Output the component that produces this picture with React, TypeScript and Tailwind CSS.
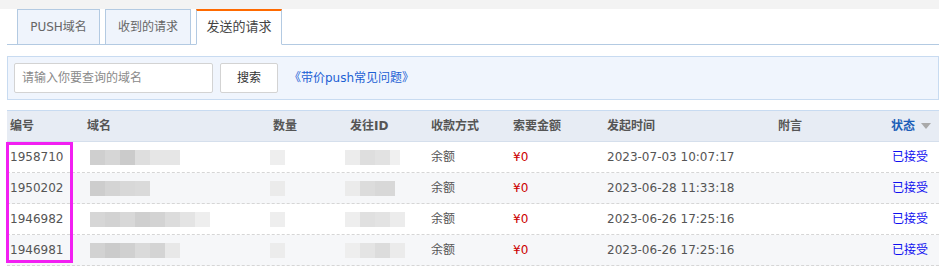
import React from "react";

type Seg = { w: number; c: string };
type Row = {
  id: string;
  name: Seg[];
  qty: Seg[];
  to: Seg[];
  time: string;
};

const rows: Row[] = [
  {
    id: "1958710",
    name: [
      { w: 15, c: "#cfcfcf" },
      { w: 15, c: "#d6d6d6" },
      { w: 15, c: "#cbcbcb" },
      { w: 15, c: "#dedede" },
      { w: 30, c: "#e6e6e6" },
    ],
    qty: [{ w: 15, c: "#eeeeee" }],
    to: [
      { w: 15, c: "#ececec" },
      { w: 15, c: "#dedede" },
      { w: 15, c: "#e2e2e2" },
      { w: 10, c: "#f0f0f0" },
    ],
    time: "2023-07-03 10:07:17",
  },
  {
    id: "1950202",
    name: [
      { w: 15, c: "#cdcdcd" },
      { w: 15, c: "#d4d4d4" },
      { w: 15, c: "#d8d8d8" },
      { w: 15, c: "#dadada" },
    ],
    qty: [{ w: 15, c: "#ebebeb" }],
    to: [
      { w: 15, c: "#ebebeb" },
      { w: 15, c: "#dcdcdc" },
      { w: 20, c: "#d8d8d8" },
    ],
    time: "2023-06-28 11:33:18",
  },
  {
    id: "1946982",
    name: [
      { w: 15, c: "#d6d6d6" },
      { w: 15, c: "#d2d2d2" },
      { w: 15, c: "#d8d8d8" },
      { w: 15, c: "#cfcfcf" },
      { w: 15, c: "#d3d3d3" },
      { w: 15, c: "#dcdcdc" },
      { w: 15, c: "#e4e4e4" },
      { w: 15, c: "#eeeeee" },
    ],
    qty: [{ w: 15, c: "#eeeeee" }],
    to: [
      { w: 15, c: "#eeeeee" },
      { w: 15, c: "#e0e0e0" },
      { w: 15, c: "#e3e3e3" },
      { w: 15, c: "#ececec" },
    ],
    time: "2023-06-26 17:25:16",
  },
  {
    id: "1946981",
    name: [
      { w: 15, c: "#d2d2d2" },
      { w: 15, c: "#cbcbcb" },
      { w: 15, c: "#d0d0d0" },
      { w: 15, c: "#dadada" },
      { w: 15, c: "#d4d4d4" },
      { w: 15, c: "#e8e8e8" },
    ],
    qty: [{ w: 15, c: "#ececec" }],
    to: [
      { w: 15, c: "#eeeeee" },
      { w: 15, c: "#e4e4e4" },
      { w: 15, c: "#dcdcdc" },
      { w: 15, c: "#ebebeb" },
    ],
    time: "2023-06-26 17:25:16",
  },
];

function Mosaic({ segs, ml }: { segs: Seg[]; ml: string }) {
  return (
    <div className={`flex h-[15px] blur-[0.6px] ${ml}`}>
      {segs.map((s, i) => (
        <div key={i} className="h-full" style={{ width: s.w, background: s.c }} />
      ))}
    </div>
  );
}

const grid =
  "grid grid-cols-[77px_186px_77px_81px_82px_94px_171px_113px_1fr]";

export default function App() {
  return (
    <div
      className="relative w-[939px] h-[266px] overflow-hidden bg-white text-[12px] text-[#555]"
      style={{ fontFamily: '"DejaVu Sans", "Noto Sans CJK SC", sans-serif' }}
    >
      <div className="h-[9px] bg-[#f3f3f3]" />
      <div className="pl-[7px]">
        {/* Tabs */}
        <div className="flex h-[36px] items-end border-b border-[#b3cae2] pl-[10px] gap-[5px]">
          <div className="-mb-px flex h-[36px] w-[83px] items-center justify-center border border-[#b3cae2] bg-[#eff4fc] text-[#666]">
            PUSH域名
          </div>
          <div className="-mb-px flex h-[36px] w-[86px] items-center justify-center border border-[#b3cae2] bg-[#eff4fc] text-[#666]">
            收到的请求
          </div>
          <div className="-mb-px flex h-[36px] w-[86px] items-center justify-center border-x border-b border-x-[#b3cae2] border-b-white border-t-[2px] border-t-[#ff6a00] bg-white pb-[1px] text-[13px] text-[#444]">
            发送的请求
          </div>
        </div>

        {/* Search bar */}
        <div className="mt-[11px] flex h-[44px] items-center border border-[#c8dbf1] bg-[#f0f5fd] pl-[6px]">
          <div className="flex h-[30px] w-[199px] items-center rounded-[2px] border border-[#d3d3d3] bg-white pl-[7px] text-[#8a8a8a]">
            请输入你要查询的域名
          </div>
          <div className="ml-[7px] flex h-[30px] w-[58px] items-center justify-center rounded-[2px] border border-[#d3d3d3] bg-white text-[#333]">
            搜索
          </div>
          <div className="ml-[11px] text-[#1c5fd4]">《带价push常见问题》</div>
        </div>

        {/* Table */}
        <div className="mt-[10px] w-[932px] border-t border-[#c8dbf1]">
          <div
            className={`${grid} h-[31px] items-center border-b border-[#d5dfec] bg-[#e7ecf4] font-bold text-[#555]`}
          >
            <div className="pl-[3px]">编号</div>
            <div className="pl-[3px]">域名</div>
            <div className="pl-[3px]">数量</div>
            <div className="pl-[3px]">发往ID</div>
            <div className="pl-[3px]">收款方式</div>
            <div className="pl-[3px]">索要金额</div>
            <div className="pl-[3px]">发起时间</div>
            <div className="pl-[3px]">附言</div>
            <div className="flex items-center pl-[3px] text-[#1c5fb8]">
              状态
              <svg width="10" height="6" viewBox="0 0 10 6" className="ml-[6px]">
                <path d="M0 0 L10 0 L5 6 Z" fill="#a9a9a9" />
              </svg>
            </div>
          </div>
          {rows.map((r, i) => (
            <div
              key={r.id}
              className={`${grid} h-[31px] items-center border-b border-dashed border-[#d6d6d6] ${
                i % 2 === 1 ? "bg-[#f6f7f9]" : "bg-white"
              }`}
            >
              <div className="pl-[3px]">{r.id}</div>
              <div>
                <Mosaic segs={r.name} ml="ml-[6px]" />
              </div>
              <div>
                <Mosaic segs={r.qty} ml="ml-[0px]" />
              </div>
              <div>
                <Mosaic segs={r.to} ml="ml-[-2px]" />
              </div>
              <div className="pl-[3px]">余额</div>
              <div className="pl-[3px] text-[#cc0000]">¥0</div>
              <div className="pl-[3px]">{r.time}</div>
              <div />
              <div className="pl-[4px] text-[#1010f0]">已接受</div>
            </div>
          ))}
        </div>
      </div>

      {/* Annotation highlight */}
      <div className="pointer-events-none absolute left-[6px] top-[142px] h-[121px] w-[67px] border-[3px] border-[#f21ff2]" />
    </div>
  );
}
